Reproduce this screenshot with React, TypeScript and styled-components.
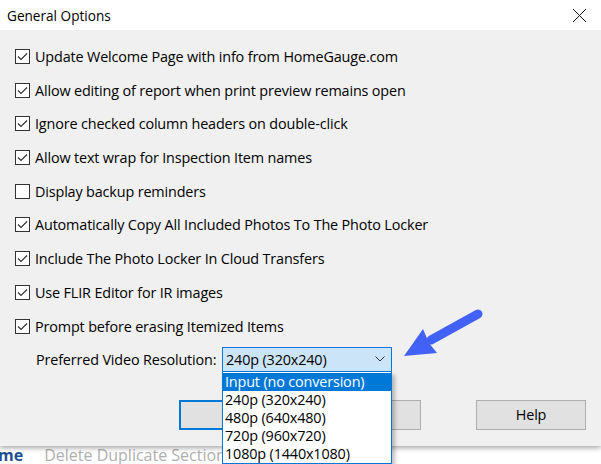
import React from 'react'
import styled, { createGlobalStyle } from 'styled-components'

const GlobalStyle = createGlobalStyle`
  html, body {
    margin: 0;
    padding: 0;
    background: #ffffff;
  }
  body {
    font-family: 'Open Sans', 'Liberation Sans', Arial, sans-serif;
  }
`

const Page = styled.div`
  position: relative;
  width: 601px;
  height: 464px;
  overflow: hidden;
  background: #ffffff;
`

const Dialog = styled.div`
  position: relative;
  z-index: 1;
  height: 446px;
  display: flex;
  flex-direction: column;
  background: #f0f0f0;
  box-shadow: 0 2px 5px rgba(0, 0, 0, 0.35);
`

const TitleBar = styled.div`
  height: 30px;
  flex: none;
  display: flex;
  align-items: center;
  justify-content: space-between;
  background: #ffffff;
  padding: 0 14px 0 7px;
`

const Title = styled.div`
  font-size: 13.6px;
  color: #000000;
`

const CloseButton = styled.div`
  width: 16px;
  height: 16px;
  display: flex;
  align-items: center;
  justify-content: center;
`

const Body = styled.div`
  flex: 1;
  display: flex;
  flex-direction: column;
  padding: 9.7px 0 0 15px;
  font-size: 14.4px;
  letter-spacing: -0.15px;
`

const OptionList = styled.div`
  display: flex;
  flex-direction: column;
`

const OptionRow = styled.label`
  height: 33.7px;
  display: flex;
  align-items: center;
  gap: 5px;
  color: #000000;
`

const Box = styled.span`
  width: 13px;
  height: 13px;
  flex: none;
  border: 1px solid #333333;
  background: #ffffff;
  display: flex;
  align-items: center;
  justify-content: center;
`

const VideoRow = styled.div`
  margin-top: 4px;
  display: flex;
  align-items: center;
  height: 25px;
`

const VideoLabel = styled.div`
  width: 207px;
  padding-left: 21px;
  box-sizing: border-box;
  white-space: nowrap;
`

const SelectWrap = styled.div`
  position: relative;
  width: 170px;
  height: 25px;
`

const SelectBox = styled.div`
  box-sizing: border-box;
  height: 25px;
  border: 1px solid #0078d7;
  background: #cce4f7;
  display: flex;
  align-items: center;
  justify-content: space-between;
  padding: 0 6px 0 3px;
`

const DropList = styled.div`
  position: absolute;
  top: 25px;
  left: 0;
  width: 170px;
  box-sizing: border-box;
  border: 1px solid #0078d7;
  border-top: none;
  background: #ffffff;
  padding-top: 1px;
  box-shadow: 3px 3px 4px rgba(0, 0, 0, 0.25);
`

const DropItem = styled.div<{ selected?: boolean }>`
  height: 18px;
  line-height: 18px;
  padding-left: 2px;
  white-space: nowrap;
  background: ${({ selected }) => (selected ? '#0078d7' : '#ffffff')};
  color: ${({ selected }) => (selected ? '#ffffff' : '#000000')};
`

const ButtonRow = styled.div`
  margin-top: 28px;
  display: flex;
  padding-left: 164px;
`

const Button = styled.div<{ focused?: boolean; gap?: number }>`
  width: 110px;
  height: 30px;
  box-sizing: border-box;
  margin-left: ${({ gap }) => gap ?? 0}px;
  background: #e1e1e1;
  border: ${({ focused }) => (focused ? '2px solid #0078d7' : '1px solid #adadad')};
  display: flex;
  align-items: center;
  justify-content: center;
  color: #000000;
`

const BackApp = styled.div`
  height: 18px;
  display: flex;
  align-items: flex-start;
  font-size: 16px;
  line-height: 18px;
  white-space: nowrap;
`

const AppTab = styled.span`
  color: #1f4f8f;
  font-weight: bold;
  margin-left: -2px;
  margin-right: 21px;
`

const AppLink = styled.span`
  color: #b0b0b0;
  margin-right: 40px;
`

const Pointer = styled.svg`
  position: absolute;
  left: 395px;
  top: 300px;
  z-index: 3;
`

const Check = () => (
  <svg width="11" height="11" viewBox="0 0 11 11">
    <polyline points="1,5.5 4,8.5 10,2.5" fill="none" stroke="#333333" strokeWidth="1.2" />
  </svg>
)

const options = [
  { label: 'Update Welcome Page with info from HomeGauge.com', checked: true },
  { label: 'Allow editing of report when print preview remains open', checked: true },
  { label: 'Ignore checked column headers on double-click', checked: true },
  { label: 'Allow text wrap for Inspection Item names', checked: true },
  { label: 'Display backup reminders', checked: false },
  { label: 'Automatically Copy All Included Photos To The Photo Locker', checked: true },
  { label: 'Include The Photo Locker In Cloud Transfers', checked: true },
  { label: 'Use FLIR Editor for IR images', checked: true },
  { label: 'Prompt before erasing Itemized Items', checked: true },
]

const resolutions = [
  'Input (no conversion)',
  '240p (320x240)',
  '480p (640x480)',
  '720p (960x720)',
  '1080p (1440x1080)',
]

export default function App() {
  return (
    <Page>
      <GlobalStyle />
      <Dialog>
        <TitleBar>
          <Title>General Options</Title>
          <CloseButton>
            <svg width="15" height="15" viewBox="0 0 15 15">
              <path d="M1 1 L14 14 M14 1 L1 14" stroke="#111111" strokeWidth="1" />
            </svg>
          </CloseButton>
        </TitleBar>
        <Body>
          <OptionList>
            {options.map((o) => (
              <OptionRow key={o.label}>
                <Box>{o.checked && <Check />}</Box>
                {o.label}
              </OptionRow>
            ))}
          </OptionList>
          <VideoRow>
            <VideoLabel>Preferred Video Resolution:</VideoLabel>
            <SelectWrap>
              <SelectBox>
                <span>240p (320x240)</span>
                <svg width="10" height="6" viewBox="0 0 10 6">
                  <polyline points="0.5,0.5 5,5 9.5,0.5" fill="none" stroke="#333333" strokeWidth="1" />
                </svg>
              </SelectBox>
              <DropList>
                {resolutions.map((r, i) => (
                  <DropItem key={r} selected={i === 0}>
                    {r}
                  </DropItem>
                ))}
              </DropList>
            </SelectWrap>
          </VideoRow>
          <ButtonRow>
            <Button focused>OK</Button>
            <Button gap={22}>Cancel</Button>
            <Button gap={55}>Help</Button>
          </ButtonRow>
        </Body>
      </Dialog>
      <BackApp>
        <AppTab>me</AppTab>
        <AppLink>Delete Duplicate Sections</AppLink>
        <AppLink>Move Down</AppLink>
      </BackApp>
      <Pointer width="95" height="65" viewBox="0 0 95 65">
        <line x1="83" y1="14" x2="36" y2="40" stroke="#4262f7" strokeWidth="9" strokeLinecap="round" />
        <polygon points="9,56 28,29 34,43 42,53" fill="#4262f7" />
      </Pointer>
    </Page>
  )
}
